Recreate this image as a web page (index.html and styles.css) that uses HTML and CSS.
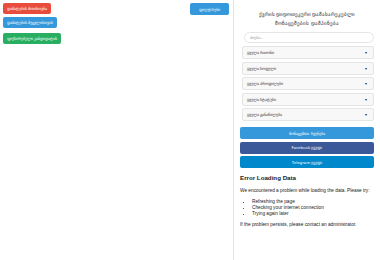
FILE: index.html
```html
<!DOCTYPE html>
<html lang="ka">
<head>
<meta charset="utf-8">
<link rel="stylesheet" href="styles.css">
</head>
<body>
<div class="main">
  <div class="actions">
    <button class="btn btn-red">დამატების მოთხოვნა</button>
    <button class="btn btn-blue">დამატების შეცვლისთვის</button>
    <button class="btn btn-green">ფიქსირებული კანდიდატის</button>
  </div>
  <button class="btn btn-filter">ფილტრები</button>
</div>
<aside class="sidebar">
  <h1 class="title">ქვრის დიდოთეკური დამახარეკებლი<br>მონაცემების დამპინება</h1>
  <input class="search" type="text" placeholder="ძიება...">
  <div class="selects">
    <div class="select"><span>ყველა რაიონი</span><span class="arrow">▾</span></div>
    <div class="select"><span>ყველა სოფელი</span><span class="arrow">▾</span></div>
    <div class="select"><span>ყველა პროფილები</span><span class="arrow">▾</span></div>
    <div class="select"><span>ყველა სტატუსი</span><span class="arrow">▾</span></div>
    <div class="select"><span>ყველა განაწილება</span><span class="arrow">▾</span></div>
  </div>
  <div class="links">
    <button class="wide wide-blue">მონაცემთა ჩვენება</button>
    <button class="wide wide-fb">Facebook ჯგუფი</button>
    <button class="wide wide-tg">Telegram ჯგუფი</button>
  </div>
  <div class="error">
    <h2 class="error-title">Error Loading Data</h2>
    <p>We encountered a problem while loading the data. Please try:</p>
    <ul>
      <li>Refreshing the page</li>
      <li>Checking your internet connection</li>
      <li>Trying again later</li>
    </ul>
    <p>If the problem persists, please contact an administrator.</p>
  </div>
</aside>
</body>
</html>
```

FILE: styles.css
```css
* { box-sizing: border-box; }
html, body { margin: 0; padding: 0; }
body {
  width: 380px;
  height: 260px;
  display: flex;
  font-family: "Liberation Sans", "Noto Sans", Arial, sans-serif;
  background: #fff;
  color: #222;
  overflow: hidden;
}
.main {
  flex: 1;
  display: flex;
  justify-content: space-between;
  align-items: flex-start;
  padding: 3px 4px 3px 3px;
}
.actions {
  display: flex;
  flex-direction: column;
  align-items: flex-start;
  gap: 3px;
}
.btn {
  border: none;
  border-radius: 2px;
  color: #fff;
  font-family: "Noto Sans", "Liberation Sans", sans-serif;
  font-size: 4.4px;
  height: 11px;
  padding: 0 4px;
  line-height: 11px;
  margin: 0;
}
.btn-red { background: #e74c3c; }
.btn-blue { background: #3498db; }
.btn-green { background: #27ae60; margin-top: 2px; }
.btn-filter { background: #3498db; height: 12px; width: 39px; font-size: 4px; }
.sidebar {
  width: 147px;
  border-left: 1px solid #e4e4e4;
  background: #fff;
  padding: 10px 6px 0 6px;
  display: flex;
  flex-direction: column;
}
.title {
  margin: 0 0 5px 0;
  text-align: center;
  font-family: "Noto Sans", "Liberation Sans", sans-serif;
  font-weight: normal;
  font-size: 5.3px;
  line-height: 8.5px;
  color: #222;
}
.search {
  height: 11px;
  margin: 0 0 3px 4px;
  border: 1px solid #e5e5e5;
  border-radius: 6px;
  background: #fff;
  font-size: 4px;
  padding: 0 5px;
  font-family: "Noto Sans", sans-serif;
}
.search::placeholder { color: #999; }
.selects {
  display: flex;
  flex-direction: column;
  gap: 2.5px;
  padding-left: 2px;
}
.select {
  height: 13px;
  border: 1px solid #e5e5e5;
  border-radius: 2px;
  background: #f8f8f8;
  display: flex;
  justify-content: space-between;
  align-items: center;
  padding: 0 6px 0 4px;
  font-family: "Noto Sans", sans-serif;
  font-size: 4.2px;
  color: #333;
}
.arrow { font-size: 4px; color: #333; }
.links {
  margin-top: 6px;
  display: flex;
  flex-direction: column;
  gap: 2.5px;
}
.wide {
  border: none;
  border-radius: 2px;
  height: 12px;
  color: #fff;
  font-size: 4.2px;
  font-family: "Noto Sans", "Liberation Sans", sans-serif;
  margin: 0;
  padding: 0;
}
.wide-blue { background: #3498db; }
.wide-fb { background: #3b5998; }
.wide-tg { background: #0088cc; }
.error {
  margin-top: 6px;
  padding-top: 0;
  font-size: 4.75px;
  color: #222;
}
.error-title {
  margin: 0 0 7px 0;
  font-size: 6.2px;
  line-height: 7px;
  font-weight: bold;
  color: #222;
}
.error p { margin: 0 0 4.5px 0; line-height: 6px; }
.error ul { margin: 0 0 5px 0; padding-left: 12px; }
.error li { line-height: 6px; }
```
